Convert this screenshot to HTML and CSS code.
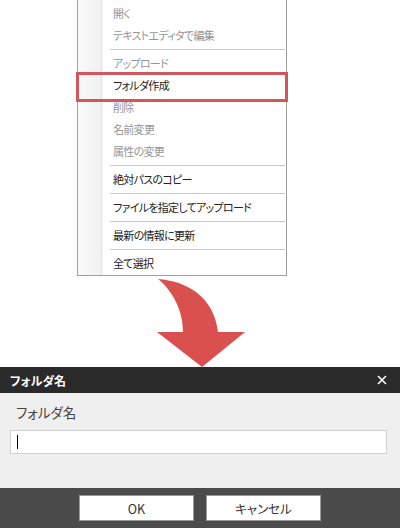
FILE: index.html
```html
<!DOCTYPE html>
<html lang="ja">
<head>
<meta charset="utf-8">
<link rel="stylesheet" href="styles.css">
</head>
<body>
<div class="stage">
  <div class="menu">
    <div class="item off">開く</div>
    <div class="item off">テキストエディタで編集</div>
    <div class="sep"></div>
    <div class="item off">アップロード</div>
    <div class="item hl">フォルダ作成</div>
    <div class="item off">削除</div>
    <div class="item off">名前変更</div>
    <div class="item off">属性の変更</div>
    <div class="sep"></div>
    <div class="item">絶対パスのコピー</div>
    <div class="sep"></div>
    <div class="item">ファイルを指定してアップロード</div>
    <div class="sep"></div>
    <div class="item">最新の情報に更新</div>
    <div class="sep"></div>
    <div class="item">全て選択</div>
  </div>
  <svg class="arrow" viewBox="0 276 400 91" width="400" height="91">
    <path d="M158,279 C186,281 214,296 218,332 L245,332 L202,367 L157,332 L183,332 C183,311 173,291 158,279 Z" fill="#d9504f"/>
  </svg>
  <div class="dialog">
    <div class="titlebar">
      <span class="title">フォルダ名</span>
      <svg class="close" viewBox="0 0 10 10" width="10" height="10"><path d="M1,1 L9,9 M9,1 L1,9" stroke="#fff" stroke-width="1.6"/></svg>
    </div>
    <div class="body">
      <div class="label">フォルダ名</div>
      <div class="input"><span class="caret"></span></div>
    </div>
    <div class="footer">
      <div class="btn">OK</div>
      <div class="btn">キャンセル</div>
    </div>
  </div>
</div>
</body>
</html>
```

FILE: styles.css
```css
html, body {
  margin: 0;
  padding: 0;
  background: #fff;
}
body {
  width: 400px;
  height: 528px;
  overflow: hidden;
  font-family: "Noto Sans CJK JP", "Noto Sans", sans-serif;
  font-feature-settings: "palt";
}
.stage {
  display: flex;
  flex-direction: column;
}
.menu {
  margin-left: 77px;
  width: 208px;
  border: 1px solid #a0a0a0;
  border-top: none;
  padding-top: 3px;
  background: linear-gradient(to right, #fafafa 0, #f1f1f1 22px, #e6e6e6 24px, #fff 25px, #fff 100%);
  display: flex;
  flex-direction: column;
}
.item {
  position: relative;
  height: 22px;
  line-height: 21px;
  padding-left: 35px;
  font-size: 11px;
  letter-spacing: -0.7px;
  color: #222;
  white-space: nowrap;
}
.item.off {
  color: #959595;
}
.item.hl::after {
  content: "";
  position: absolute;
  left: -2px;
  right: -2px;
  top: -3px;
  bottom: -5px;
  border: 3px solid #d3565c;
}
.sep {
  height: 1px;
  margin: 2px 1px 3px 32px;
  background: #c8c8c8;
}
.arrow {
  display: block;
}
.dialog {
  display: flex;
  flex-direction: column;
  width: 400px;
}
.titlebar {
  height: 26px;
  background: #2a2a2a;
  display: flex;
  align-items: center;
  justify-content: space-between;
  padding: 0 13px 0 10px;
}
.title {
  color: #fff;
  font-weight: bold;
  font-size: 12px;
}
.close {
  display: block;
}
.body {
  background: #efefef;
  height: 95px;
  padding: 8px 13px 0 10px;
  box-sizing: border-box;
}
.label {
  font-size: 13.5px;
  color: #444;
  padding-left: 6px;
  line-height: 22px;
}
.input {
  margin-top: 7px;
  height: 24px;
  background: #fff;
  border: 1px solid #d2d2d2;
  box-sizing: border-box;
  display: flex;
  align-items: center;
  padding-left: 6px;
}
.caret {
  display: block;
  width: 1px;
  height: 14px;
  background: #000;
}
.footer {
  height: 40px;
  background: #4b4b4b;
  display: flex;
  justify-content: center;
  align-items: flex-start;
  gap: 12px;
  padding-top: 7px;
  box-sizing: border-box;
}
.btn {
  width: 115px;
  height: 26px;
  box-sizing: border-box;
  background: #fff;
  border: 1px solid #9a9a9a;
  display: flex;
  align-items: center;
  justify-content: center;
  font-size: 12.5px;
  color: #333;
}
```
